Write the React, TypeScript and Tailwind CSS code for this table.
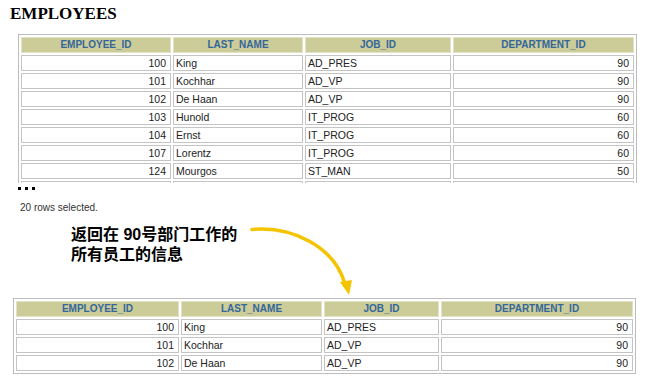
import React from 'react';

type Row = [string, string, string, string];

const allRows: Row[] = [
  ['100', 'King', 'AD_PRES', '90'],
  ['101', 'Kochhar', 'AD_VP', '90'],
  ['102', 'De Haan', 'AD_VP', '90'],
  ['103', 'Hunold', 'IT_PROG', '60'],
  ['104', 'Ernst', 'IT_PROG', '60'],
  ['107', 'Lorentz', 'IT_PROG', '60'],
  ['124', 'Mourgos', 'ST_MAN', '50'],
];

const heads = ['EMPLOYEE_ID', 'LAST_NAME', 'JOB_ID', 'DEPARTMENT_ID'];

function EmpTable({ rows, widths, more = false }: { rows: Row[]; widths: number[]; more?: boolean }) {
  return (
    <table
      className="table-fixed border-separate border-spacing-[2px] border border-[#bdbdbd] bg-white text-[10.5px] leading-none"
      style={{ fontFamily: '"Liberation Sans", Arial, sans-serif' }}
    >
      <colgroup>
        {widths.map((w, i) => (
          <col key={i} style={{ width: w }} />
        ))}
      </colgroup>
      <thead>
        <tr>
          {heads.map((h) => (
            <th
              key={h}
              className="h-[16px] p-0 border border-[#e2e2c8] bg-[#cccc99] text-center text-[10px] font-bold text-[#336699]"
            >
              {h}
            </th>
          ))}
        </tr>
      </thead>
      <tbody>
        {rows.map((r) => (
          <tr key={r[0]}>
            <td className="h-[16px] p-0 pr-[4px] border border-[#c4c4c4] text-right text-[#222]">{r[0]}</td>
            <td className="h-[16px] p-0 pl-[2px] border border-[#c4c4c4] text-left text-[#222]">{r[1]}</td>
            <td className="h-[16px] p-0 pl-[2px] border border-[#c4c4c4] text-left text-[#222]">{r[2]}</td>
            <td className="h-[16px] p-0 pr-[4px] border border-[#c4c4c4] text-right text-[#222]">{r[3]}</td>
          </tr>
        ))}
        {more && (
          <tr>
            <td className="h-[16px] p-0 border border-[#c4c4c4]" />
            <td className="h-[16px] p-0 border border-[#c4c4c4]" />
            <td className="h-[16px] p-0 border border-[#c4c4c4]" />
            <td className="h-[16px] p-0 border border-[#c4c4c4]" />
          </tr>
        )}
      </tbody>
    </table>
  );
}

export default function App() {
  return (
    <div className="relative w-[646px] h-[379px] overflow-hidden bg-white">
      <div
        className="mt-[4px] ml-[10px] text-[17px] leading-[19px] font-bold text-black"
        style={{ fontFamily: '"Liberation Serif", "Times New Roman", serif' }}
      >
        EMPLOYEES
      </div>

      <div className="mt-[11px] ml-[18px] h-[149px] overflow-hidden">
        <EmpTable rows={allRows} widths={[150, 130, 146, 181]} more />
      </div>

      <div className="mt-[4px] ml-[18px] flex gap-[4px]">
        <span className="w-[3px] h-[3px] bg-black" />
        <span className="w-[3px] h-[3px] bg-black" />
        <span className="w-[3px] h-[3px] bg-black" />
      </div>

      <div
        className="mt-[12px] ml-[20px] text-[10px] leading-[12px] text-[#333]"
        style={{ fontFamily: '"Liberation Sans", Arial, sans-serif' }}
      >
        20 rows selected.
      </div>

      <div
        className="mt-[11px] ml-[71px] text-[16px] leading-[20px] font-bold text-black"
        style={{ fontFamily: '"Liberation Sans", Arial, "Noto Sans CJK SC", sans-serif' }}
      >
        <div>返回在 90号部门工作的</div>
        <div>所有员工的信息</div>
      </div>

      <div className="mt-[33px] ml-[13px]">
        <EmpTable rows={allRows.slice(0, 3)} widths={[163, 141, 115, 192]} />
      </div>

      <svg className="absolute left-[240px] top-[220px]" width="120" height="85" viewBox="0 0 120 85">
        <path
          d="M12 9.5 C 52 6, 94 26, 105 64"
          fill="none"
          stroke="#f5c400"
          strokeWidth="3.5"
          strokeLinecap="round"
        />
        <path d="M100 62 L112 60 L109 75 Z" fill="#f5c400" />
      </svg>
    </div>
  );
}
